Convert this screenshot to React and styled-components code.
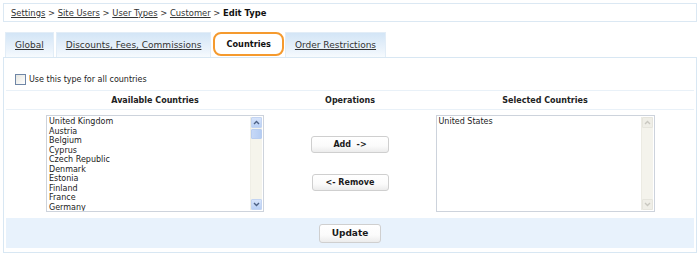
import React from "react";
import styled, { createGlobalStyle } from "styled-components";

const GlobalStyle = createGlobalStyle`
  html, body {
    margin: 0;
    padding: 0;
    background: #fff;
  }
  body {
    font-family: "DejaVu Sans", Verdana, sans-serif;
    color: #222;
  }
`;

const AVAILABLE = [
  "United Kingdom",
  "Austria",
  "Belgium",
  "Cyprus",
  "Czech Republic",
  "Denmark",
  "Estonia",
  "Finland",
  "France",
  "Germany",
];

const SELECTED = ["United States"];

const TABS = [
  { label: "Global" },
  { label: "Discounts, Fees, Commissions" },
  { label: "Countries", active: true },
  { label: "Order Restrictions" },
];

const Page = styled.div`
  width: 694px;
  padding: 3px 3px 0 3px;
`;

const Breadcrumb = styled.div`
  height: 17px;
  border: 1px solid #dbe8f3;
  padding-left: 7px;
  display: flex;
  align-items: center;
  font-size: 8.4px;
  color: #333;
  white-space: pre;
`;

const Crumb = styled.a`
  color: #333;
  text-decoration: underline;
`;

const Current = styled.b`
  color: #111;
`;

const TabBar = styled.div`
  display: flex;
  align-items: flex-start;
  gap: 2px;
  padding-left: 2px;
  margin-top: 10px;
  position: relative;
  z-index: 1;
`;

const Tab = styled.div`
  height: ${(p) => (p.$active ? "20px" : "24px")};
  padding: 0 ${(p) => (p.$active ? "11px" : "9px")};
  display: flex;
  align-items: center;
  font-size: ${(p) => (p.$active ? "8.2px" : "9px")};
  color: ${(p) => (p.$active ? "#111" : "#333")};
  font-weight: ${(p) => (p.$active ? "bold" : "normal")};
  text-decoration: ${(p) => (p.$active ? "none" : "underline")};
  background: ${(p) =>
    p.$active ? "#fff" : "linear-gradient(#d3e5f6, #eef5fc 80%, #f7fbfe)"};
  border: ${(p) => (p.$active ? "2px solid #f59a2e" : "1px solid #e2edf7")};
  border-bottom: ${(p) => (p.$active ? "2px solid #f59a2e" : "none")};
  border-radius: ${(p) => (p.$active ? "8px" : "0")};
  margin-left: ${(p) => (p.$active ? "0" : "0")};
  margin-right: ${(p) => (p.$active ? "-1px" : "0")};
`;

const Panel = styled.div`
  border: 1px solid #d8e7f3;
  padding: 0 2px 4px 2px;
`;

const CheckRow = styled.label`
  display: flex;
  align-items: center;
  gap: 3px;
  height: 32px;
  padding-left: 9px;
  padding-top: 10px;
  box-sizing: border-box;
  font-size: 8px;
  color: #222;
`;

const CheckBox = styled.span`
  width: 9px;
  height: 9px;
  border: 1px solid #6f86a6;
  background: linear-gradient(135deg, #e6e6e0, #fff);
  display: inline-block;
`;

const Table = styled.div`
  display: grid;
  grid-template-columns: 298px 92px 1fr;
  border-top: 1px solid #e9f1f8;
`;

const HeadCell = styled.div`
  height: 18px;
  display: flex;
  align-items: center;
  justify-content: center;
  font-size: 8px;
  font-weight: bold;
  color: #222;
  border-bottom: 1px solid #e9f1f8;
`;

const Cell = styled.div`
  display: flex;
  justify-content: center;
  padding-top: 5px;
  height: 103px;
  box-sizing: border-box;
`;

const OpsCell = styled(Cell)`
  flex-direction: column;
  align-items: center;
  justify-content: flex-start;
  padding-top: 26px;
  gap: 21px;
`;

const ListBox = styled.div`
  width: ${(p) => p.$width}px;
  height: 97px;
  box-sizing: border-box;
  border: 1px solid #cdd3dc;
  background: #fff;
  display: flex;
`;

const Items = styled.div`
  flex: 1;
  padding: 1px 2px;
  font-size: 8px;
  line-height: 9.5px;
  color: #222;
  overflow: hidden;
`;

const ScrollBar = styled.div`
  width: 11px;
  margin: 1px 1px 1px 0;
  display: flex;
  flex-direction: column;
  background: ${(p) => (p.$disabled ? "#f4f3ec" : "#f5f4ec")};
  border-left: 1px solid ${(p) => (p.$disabled ? "#ecebe3" : "#efeee6")};
`;

const Arrow = styled.div`
  height: 11px;
  display: flex;
  align-items: center;
  justify-content: center;
  border-radius: 1px;
  background: ${(p) =>
    p.$disabled ? "#efeee7" : "linear-gradient(#d7e4fb, #b9d0f5)"};
  border: 1px solid ${(p) => (p.$disabled ? "#e6e5dd" : "#c3d4f2")};
  box-sizing: border-box;
`;

const Track = styled.div`
  flex: 1;
  display: flex;
  flex-direction: column;
`;

const Thumb = styled.div`
  height: 10px;
  margin-top: 1px;
  background: linear-gradient(90deg, #c6d8f7, #b5cdf3);
  border: 1px solid #b8cdf0;
  box-sizing: border-box;
  border-radius: 1px;
`;

const Button = styled.button`
  width: ${(p) => p.$width}px;
  height: ${(p) => p.$height || 17}px;
  padding: 0;
  font-family: "DejaVu Sans", Verdana, sans-serif;
  font-size: ${(p) => p.$size || 8}px;
  font-weight: bold;
  color: #1a1a1a;
  white-space: pre;
  background: linear-gradient(#ffffff, #fbfbfb 60%, #ececec);
  border: 1px solid #cfcfcf;
  border-radius: 3px;
`;

const Footer = styled.div`
  margin-top: 5px;
  height: 30px;
  background: #e8f2fc;
  display: flex;
  align-items: center;
  justify-content: center;
`;

const Chevron = ({ up, disabled }) => (
  <svg width="7" height="5" viewBox="0 0 7 5">
    <path
      d={up ? "M1 4 L3.5 1.5 L6 4" : "M1 1 L3.5 3.5 L6 1"}
      fill="none"
      stroke={disabled ? "#c9c8c0" : "#4d6185"}
      strokeWidth="1.4"
    />
  </svg>
);

const Scroller = ({ disabled }) => (
  <ScrollBar $disabled={disabled}>
    <Arrow $disabled={disabled}>
      <Chevron up disabled={disabled} />
    </Arrow>
    <Track>{!disabled && <Thumb />}</Track>
    <Arrow $disabled={disabled}>
      <Chevron disabled={disabled} />
    </Arrow>
  </ScrollBar>
);

const CountryList = ({ items, width, disabled }) => (
  <ListBox $width={width}>
    <Items>
      {items.map((c) => (
        <div key={c}>{c}</div>
      ))}
    </Items>
    <Scroller disabled={disabled} />
  </ListBox>
);

const App = () => {
  return (
    <Page>
      <GlobalStyle />
      <Breadcrumb>
        <Crumb>Settings</Crumb>{" > "}
        <Crumb>Site Users</Crumb>{" > "}
        <Crumb>User Types</Crumb>{" > "}
        <Crumb>Customer</Crumb>{" > "}
        <Current>Edit Type</Current>
      </Breadcrumb>

      <TabBar>
        {TABS.map((t) => (
          <Tab key={t.label} $active={t.active}>
            {t.label}
          </Tab>
        ))}
      </TabBar>

      <Panel>
        <CheckRow>
          <CheckBox />
          Use this type for all countries
        </CheckRow>

        <Table>
          <HeadCell>Available Countries</HeadCell>
          <HeadCell>Operations</HeadCell>
          <HeadCell>Selected Countries</HeadCell>

          <Cell>
            <CountryList items={AVAILABLE} width={218} />
          </Cell>
          <OpsCell>
            <Button $width={78}>{"Add  ->"}</Button>
            <Button $width={77}>{"<- Remove"}</Button>
          </OpsCell>
          <Cell>
            <CountryList items={SELECTED} width={219} disabled />
          </Cell>
        </Table>

        <Footer>
          <Button $width={62} $height={19} $size={9}>
            Update
          </Button>
        </Footer>
      </Panel>
    </Page>
  );
};

export default App;
